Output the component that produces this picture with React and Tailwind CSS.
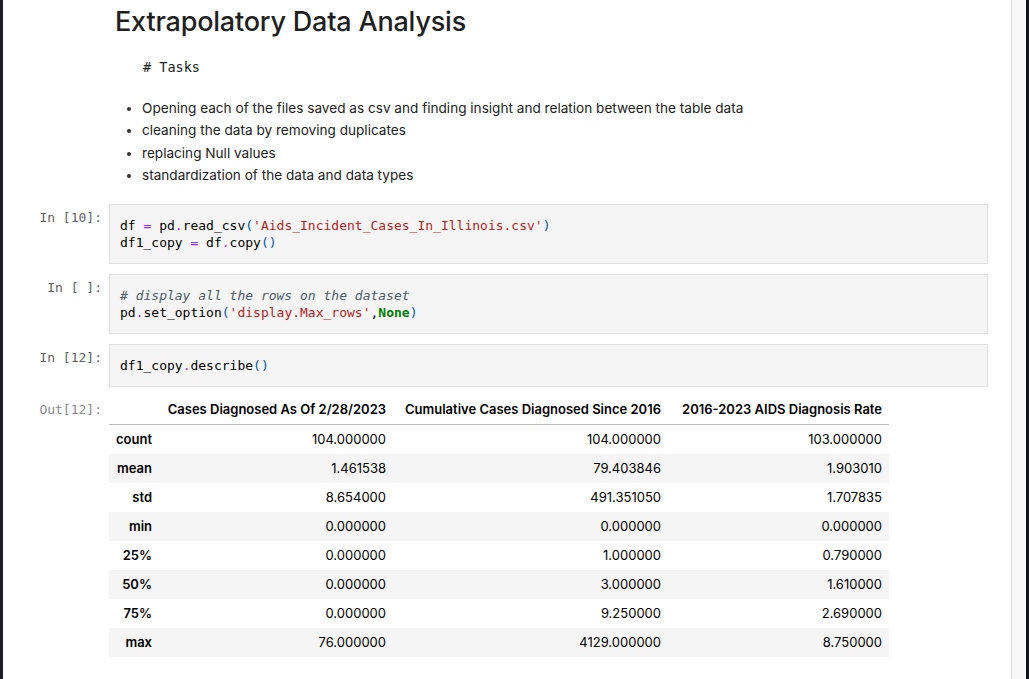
const MONO = { fontFamily: '"DejaVu Sans Mono", "Liberation Mono", monospace' };

const OP = "text-[#aa22ff]";
const PAREN = "text-[#0055aa]";
const STR = "text-[#ba2121]";

const ROWS = [
  ["count", "104.000000", "104.000000", "103.000000"],
  ["mean", "1.461538", "79.403846", "1.903010"],
  ["std", "8.654000", "491.351050", "1.707835"],
  ["min", "0.000000", "0.000000", "0.000000"],
  ["25%", "0.000000", "1.000000", "0.790000"],
  ["50%", "0.000000", "3.000000", "1.610000"],
  ["75%", "0.000000", "9.250000", "2.690000"],
  ["max", "76.000000", "4129.000000", "8.750000"],
];

function Prompt({ children, out }) {
  return (
    <div
      className={`w-[106px] shrink-0 pr-[7px] text-right text-[13px] leading-[17px] whitespace-pre ${
        out ? "pt-[6px] text-[#8a8a8a]" : "pt-[5px] text-[#5f5f5f]"
      }`}
      style={MONO}
    >
      {children}
    </div>
  );
}

function CodeCell({ prompt, children }) {
  return (
    <div className="flex">
      <Prompt>{prompt}</Prompt>
      <div
        className="w-[879px] border border-[#e0e0e0] bg-[#f5f5f5] pl-[10px] pt-[12px] pb-[12px] text-[13px] leading-[17px] text-black whitespace-pre"
        style={MONO}
      >
        {children}
      </div>
    </div>
  );
}

export default function App() {
  return (
    <div
      className="w-[1029px] h-[679px] flex overflow-hidden bg-white"
      style={{ fontFamily: 'Inter, "Liberation Sans", sans-serif' }}
    >
      <div className="w-[3px] shrink-0 bg-[#1b1e25]" />

      <div className="flex-1 flex flex-col bg-white">
        {/* markdown cell */}
        <div className="pl-[112px]">
          <h1 className="mt-[6px] text-[27px] leading-[32px] font-medium text-[#1f1f1f] tracking-[-0.2px]">
            Extrapolatory Data Analysis
          </h1>
          <div className="mt-[21px] pl-[28px] text-[13.5px] leading-[17px] text-[#222]" style={MONO}>
            # Tasks
          </div>
          <ul className="mt-[21px] pl-[27px] list-disc text-[13.6px] leading-[22.3px] text-[#222] marker:text-[#333]">
            <li>Opening each of the files saved as csv and finding insight and relation between the table data</li>
            <li>cleaning the data by removing duplicates</li>
            <li>replacing Null values</li>
            <li>standardization of the data and data types</li>
          </ul>
        </div>

        <div className="mt-[18px] flex flex-col gap-[10px]">
          <CodeCell prompt="In [10]:">
            {"df "}
            <span className={OP}>=</span>
            {" pd"}
            <span className={OP}>.</span>
            {"read_csv"}
            <span className={PAREN}>(</span>
            <span className={STR}>'Aids_Incident_Cases_In_Illinois.csv'</span>
            <span className={PAREN}>)</span>
            {"\ndf1_copy "}
            <span className={OP}>=</span>
            {" df"}
            <span className={OP}>.</span>
            {"copy"}
            <span className={PAREN}>()</span>
          </CodeCell>

          <CodeCell prompt="In [ ]:">
            <span className="italic text-[#4d5b66]"># display all the rows on the dataset</span>
            {"\npd"}
            <span className={OP}>.</span>
            {"set_option"}
            <span className={PAREN}>(</span>
            <span className={STR}>'display.Max_rows'</span>
            {","}
            <span className="font-bold text-[#008000]">None</span>
            <span className={PAREN}>)</span>
          </CodeCell>

          <CodeCell prompt="In [12]:">
            {"df1_copy"}
            <span className={OP}>.</span>
            {"describe"}
            <span className={PAREN}>()</span>
          </CodeCell>
        </div>

        {/* output */}
        <div className="mt-[8px] flex">
          <Prompt out>Out[12]:</Prompt>
          <table className="table-fixed border-collapse text-[13px] leading-[17px] text-black">
            <colgroup>
              <col className="w-[50px]" />
              <col className="w-[234px]" />
              <col className="w-[275px]" />
              <col className="w-[221px]" />
            </colgroup>
            <thead>
              <tr className="border-b border-[#bdbdbd]">
                <th className="px-[7px] py-[6px]" />
                <th className="px-[7px] py-[6px] text-right font-semibold whitespace-nowrap">Cases Diagnosed As Of 2/28/2023</th>
                <th className="px-[7px] py-[6px] text-right font-semibold whitespace-nowrap">Cumulative Cases Diagnosed Since 2016</th>
                <th className="px-[7px] py-[6px] text-right font-semibold whitespace-nowrap">2016-2023 AIDS Diagnosis Rate</th>
              </tr>
            </thead>
            <tbody>
              {ROWS.map((r, i) => (
                <tr key={r[0]} className={i % 2 === 1 ? "bg-[#f5f5f5]" : ""}>
                  <th className="px-[7px] py-[6px] text-right font-semibold">{r[0]}</th>
                  <td className="px-[7px] py-[6px] text-right">{r[1]}</td>
                  <td className="px-[7px] py-[6px] text-right">{r[2]}</td>
                  <td className="px-[7px] py-[6px] text-right">{r[3]}</td>
                </tr>
              ))}
            </tbody>
          </table>
        </div>
      </div>

      <div className="w-[1px] shrink-0 bg-[#dedede]" />
      <div className="w-[14px] shrink-0 bg-[#f8f8f8]" />
      <div className="w-[3px] shrink-0 bg-[#12151b]" />
    </div>
  );
}
